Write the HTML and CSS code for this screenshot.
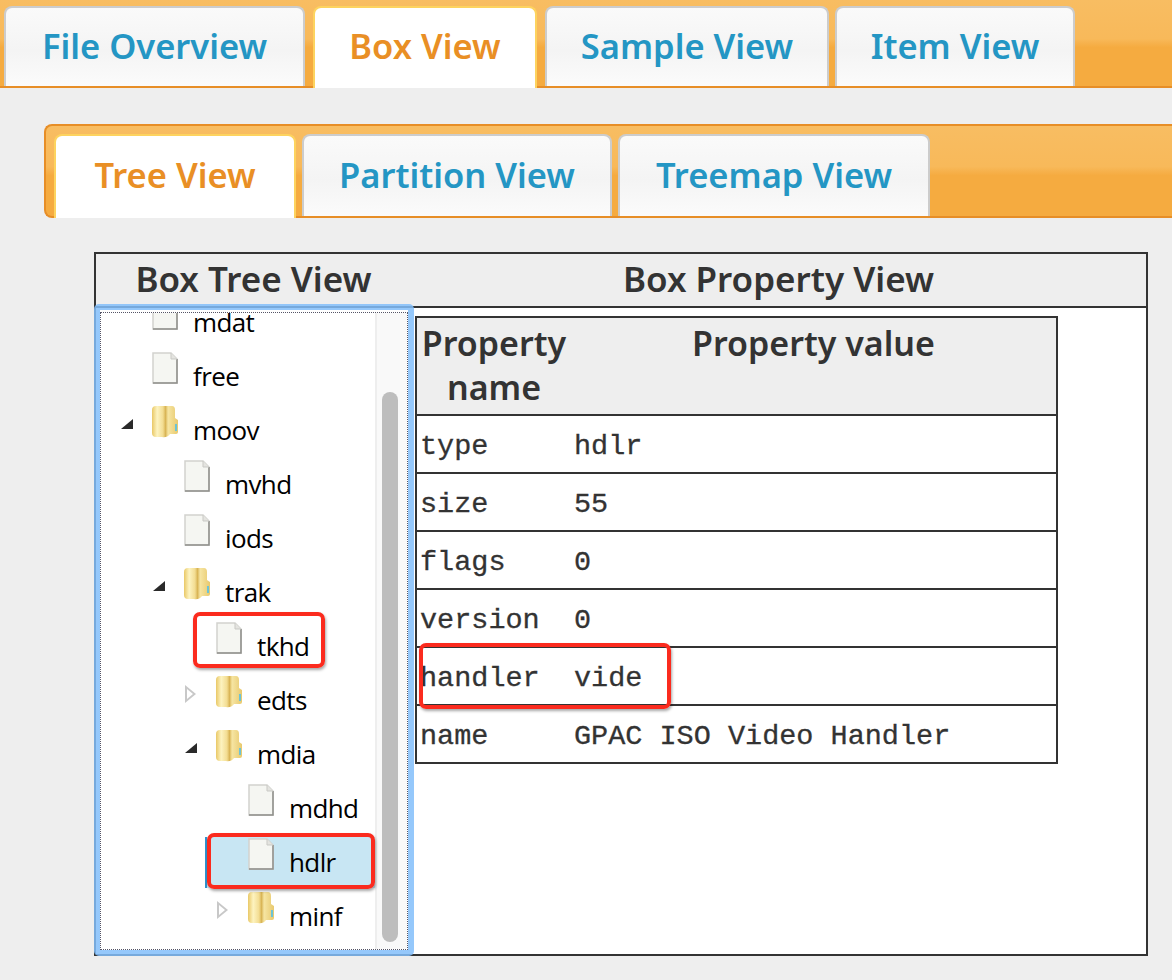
FILE: index.html
```html
<!DOCTYPE html>
<html>
<head>
	<title>Box View</title>
	<link rel="stylesheet" href="styles.css">
</head>
<body>
	<svg class="defs" width="0" height="0">
		<defs>
			<linearGradient id="folder-fill" x1="0" y1="0" x2="1" y2="0">
				<stop offset="0" stop-color="#e9c866"/>
				<stop offset="0.2" stop-color="#fdf3c0"/>
				<stop offset="0.42" stop-color="#f3dd92"/>
				<stop offset="0.52" stop-color="#d9b556"/>
				<stop offset="0.62" stop-color="#f6e5a2"/>
				<stop offset="1" stop-color="#e8c96e"/>
			</linearGradient>
		</defs>
		<symbol id="file" viewBox="0 0 26 32">
			<path d="M1 1H19L25 7V31H1Z" fill="#f5f6f2" stroke="#d2d2ce" stroke-width="1.5"/>
			<path d="M1 31H25V7" fill="none" stroke="#8f8f8b" stroke-width="1.5"/>
			<path d="M19 1V7H25" fill="#e4e4e0" stroke="#c9c9c5"/>
		</symbol>
		<symbol id="folder" viewBox="0 0 26 32">
			<path d="M4 0H20Q23 0 23 4V12L26 14V26Q26 28 24 28H18Q15 32 10 31H4Q0 31 0 27V4Q0 0 4 0Z" fill="url(#folder-fill)"/>
			<rect x="23" y="18" width="2" height="7" fill="#6cc3d5"/>
		</symbol>
	</svg>

	<div class="tabs main-tabs">
		<a class="tab file-tab">File Overview</a>
		<a class="tab active box-tab">Box View</a>
		<a class="tab sample-tab">Sample View</a>
		<a class="tab item-tab">Item View</a>
	</div>

	<div class="tabs sub-tabs">
		<a class="tab active tree-tab">Tree View</a>
		<a class="tab partition-tab">Partition View</a>
		<a class="tab treemap-tab">Treemap View</a>
	</div>

	<div class="viewer">
		<div class="viewer-head">Box Tree View</div>
		<div class="viewer-head">Box Property View</div>

		<div class="tree-box">
			<div class="tree-inner">
				<ul class="tree">
					<li class="lvl0"><span class="arrow"></span><svg class="icon"><use href="#file"/></svg>mdat</li>
					<li class="lvl0"><span class="arrow"></span><svg class="icon"><use href="#file"/></svg>free</li>
					<li class="lvl0"><span class="arrow open"></span><svg class="icon"><use href="#folder"/></svg>moov</li>
					<li class="lvl1"><span class="arrow"></span><svg class="icon"><use href="#file"/></svg>mvhd</li>
					<li class="lvl1"><span class="arrow"></span><svg class="icon"><use href="#file"/></svg>iods</li>
					<li class="lvl1"><span class="arrow open"></span><svg class="icon"><use href="#folder"/></svg>trak</li>
					<li class="lvl2"><span class="arrow"></span><svg class="icon"><use href="#file"/></svg>tkhd</li>
					<li class="lvl2"><span class="arrow closed"></span><svg class="icon"><use href="#folder"/></svg>edts</li>
					<li class="lvl2"><span class="arrow open"></span><svg class="icon"><use href="#folder"/></svg>mdia</li>
					<li class="lvl3"><span class="arrow"></span><svg class="icon"><use href="#file"/></svg>mdhd</li>
					<li class="lvl3"><span class="selected"></span><span class="arrow"></span><svg class="icon"><use href="#file"/></svg><span class="label">hdlr</span></li>
					<li class="lvl3"><span class="arrow closed"></span><svg class="icon"><use href="#folder"/></svg>minf</li>
				</ul>
				<div class="scroll"><div class="thumb"></div></div>
			</div>
		</div>

		<div class="prop-box">
			<table class="props">
				<tr>
					<th class="name-col">Property name</th>
					<th>Property value</th>
				</tr>
				<tr><td>type</td><td>hdlr</td></tr>
				<tr><td>size</td><td>55</td></tr>
				<tr><td>flags</td><td>0</td></tr>
				<tr><td>version</td><td>0</td></tr>
				<tr><td>handler</td><td>vide</td></tr>
				<tr><td>name</td><td>GPAC ISO Video Handler</td></tr>
			</table>
		</div>
	</div>

	<div class="mark mark-tkhd"></div>
	<div class="mark mark-hdlr"></div>
	<div class="mark mark-handler"></div>
</body>
</html>
```

FILE: styles.css
```css
html, body {
	margin: 0;
	padding: 0;
}

body {
	background-color: #eee;
	font-family: "Noto Sans", sans-serif;
	height: 980px;
	overflow: hidden;
	position: relative;
}

.defs {
	position: absolute;
}

/* tab strips */
.tabs {
	background: linear-gradient(#f8bd62, #f8b95a 45%, #f5ab40 55%, #f5ab40);
	border-bottom: 2px solid #e78e27;
	box-sizing: border-box;
	display: flex;
}

.main-tabs {
	gap: 8px;
	height: 88px;
	line-height: 75px;
	padding: 6px 0 0 4px;
}

.sub-tabs {
	border-left: 2px solid #e78e27;
	border-radius: 8px 0 0 8px;
	border-top: 2px solid #e78e27;
	gap: 6px;
	height: 94px;
	line-height: 78px;
	margin: 36px 0 0 44px;
	padding: 8px 0 0 8px;
}

.tab {
	background: linear-gradient(#fafafa, #f4f4f4 55%, #fbfbfb);
	border: 2px solid #ccc;
	border-bottom: none;
	border-radius: 8px 8px 0 0;
	box-sizing: border-box;
	color: #2496c4;
	font-size: 34.5px;
	font-weight: 600;
	text-align: center;
}

.tab.active {
	background: #fff;
	border-color: #fdd35f;
	color: #e98f25;
	height: calc(100% + 2px);
}

.file-tab { width: 301px; }
.box-tab { width: 224px; }
.sample-tab { width: 284px; margin-right: -2px; }
.item-tab { width: 240px; }
.tree-tab { width: 242px; }
.partition-tab { width: 310px; }
.treemap-tab { width: 312px; }

/* viewer frame */
.viewer {
	background-color: #fff;
	border: 2px solid #333;
	box-sizing: border-box;
	display: grid;
	grid-template-columns: 315px 1fr;
	grid-template-rows: 54px 1fr;
	height: 704px;
	margin: 34px 0 0 94px;
	width: 1054px;
}

.viewer-head {
	background-color: #eee;
	border-bottom: 2px solid #333;
	color: #333;
	font-size: 35px;
	font-weight: 600;
	line-height: 50px;
	text-align: center;
}

.tree-box {
	background-clip: padding-box;
	background-color: #fff;
	border: 6px solid rgba(130,190,250,0.85);
	border-radius: 5px;
	box-sizing: border-box;
	height: 652px;
	margin: -4px 0 0 -2px;
	padding-top: 2px;
	width: 320px;
}

.tree-inner {
	border: 1px dotted #556;
	box-sizing: border-box;
	display: flex;
	height: 100%;
	overflow: hidden;
}

/* tree list */
.tree {
	flex: 1;
	font-family: "Open Sans", sans-serif;
	font-size: 26px;
	letter-spacing: -0.6px;
	list-style: none;
	margin: -18px 0 0;
	padding: 0;
}

.tree li {
	align-items: center;
	color: #000;
	display: flex;
	height: 54px;
	position: relative;
}

.lvl0 { padding-left: 13px; }
.lvl1 { padding-left: 45px; }
.lvl2 { padding-left: 77px; }
.lvl3 { padding-left: 109px; }

.arrow {
	height: 14px;
	position: relative;
	top: -6px;
	width: 38px;
}

.arrow.open::before {
	border-bottom: 10px solid #2a2a2a;
	border-left: 12px solid transparent;
	content: "";
	left: 7px;
	position: absolute;
	top: 2px;
}

.arrow.closed::before {
	border-bottom: 9px solid transparent;
	border-left: 11px solid #c8c8c8;
	border-top: 9px solid transparent;
	content: "";
	left: 7px;
	position: absolute;
	top: -2px;
}

.arrow.closed::after {
	border-bottom: 5px solid transparent;
	border-left: 6px solid #fff;
	border-top: 5px solid transparent;
	content: "";
	left: 9px;
	position: absolute;
	top: 2px;
}

.icon {
	flex: none;
	height: 32px;
	margin-right: 15px;
	position: relative;
	top: -8px;
	width: 26px;
}

.selected {
	background-color: #c8e6f3;
	border-left: 2px solid #2f93d0;
	bottom: 1px;
	left: 104px;
	position: absolute;
	right: 0;
	top: 2px;
}

.label {
	position: relative;
}

.scroll {
	background-color: #f9f9f9;
	border-left: 2px solid #eee;
	box-sizing: border-box;
	flex: none;
	padding: 79px 0 7px 5px;
	width: 32px;
}

.thumb {
	background-color: #bdbdbd;
	border-radius: 8px;
	height: 100%;
	width: 16px;
}

/* property table */
.prop-box {
	padding: 8px 0 0 4px;
}

.props {
	border: 2px solid #333;
	border-collapse: collapse;
	width: 643px;
}

.props th {
	background-color: #eee;
	color: #333;
	font-size: 34px;
	font-weight: 600;
	height: 93px;
	line-height: 44px;
	padding: 3px 4px 0;
	vertical-align: top;
}

.props tr {
	border-bottom: 2px solid #333;
}

.name-col {
	width: 146px;
}

.props td {
	color: #333;
	font-family: "Liberation Mono", monospace;
	font-size: 28.5px;
	height: 52px;
	padding: 4px 0 0 3px;
	-webkit-text-stroke: 0.3px #333;
}

/* red notes on the picture */
.mark {
	border: 4px solid #fb2b1e;
	border-radius: 7px;
	box-shadow: 1px 2px 3px rgba(0,0,0,0.35);
	box-sizing: border-box;
	position: absolute;
}

.mark-tkhd { height: 56px; left: 193px; top: 612px; width: 132px; }
.mark-hdlr { height: 56px; left: 207px; top: 833px; width: 168px; }
.mark-handler { height: 66px; left: 419px; top: 643px; width: 252px; }
```
